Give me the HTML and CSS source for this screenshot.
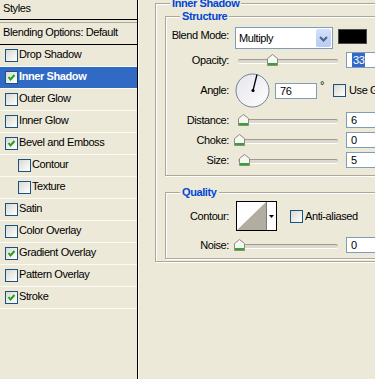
FILE: index.html
```html
<!DOCTYPE html>
<html lang="en">
<head>
    <meta charset="UTF-8">
    <meta name="viewport" content="width=device-width, initial-scale=1.0">
    <title>Layer Style</title>
    <link rel="stylesheet" href="styles.css">
</head>
<body>
    <div class="dialog">
        <aside class="styles">
            <div class="styles-head">Styles</div>
            <div class="styles-blend">Blending Options: Default</div>
            <ul class="fx">
                <li><span class="cb"></span><span class="fx-name">Drop Shadow</span></li>
                <li class="sel"><span class="cb"><svg width="11" height="11"><polyline points="2.5,5 4.5,7.5 8.5,3" /></svg></span><span class="fx-name">Inner Shadow</span></li>
                <li><span class="cb"></span><span class="fx-name">Outer Glow</span></li>
                <li><span class="cb"></span><span class="fx-name">Inner Glow</span></li>
                <li><span class="cb"><svg width="11" height="11"><polyline points="2.5,5 4.5,7.5 8.5,3" /></svg></span><span class="fx-name">Bevel and Emboss</span></li>
                <li class="sub"><span class="cb"></span><span class="fx-name">Contour</span></li>
                <li class="sub"><span class="cb"></span><span class="fx-name">Texture</span></li>
                <li><span class="cb"></span><span class="fx-name">Satin</span></li>
                <li><span class="cb"></span><span class="fx-name">Color Overlay</span></li>
                <li><span class="cb"><svg width="11" height="11"><polyline points="2.5,5 4.5,7.5 8.5,3" /></svg></span><span class="fx-name">Gradient Overlay</span></li>
                <li><span class="cb"></span><span class="fx-name">Pattern Overlay</span></li>
                <li><span class="cb"><svg width="11" height="11"><polyline points="2.5,5 4.5,7.5 8.5,3" /></svg></span><span class="fx-name">Stroke</span></li>
            </ul>
        </aside>

        <main class="panel">
            <fieldset class="group outer">
                <legend>Inner Shadow</legend>

                <fieldset class="group structure">
                    <legend>Structure</legend>

                    <div class="row blend-row">
                        <label class="lbl">Blend Mode:</label>
                        <div class="select">
                            <span>Multiply</span>
                            <span class="select-btn">
                                <svg width="15" height="20"><polyline points="4,8 7.5,11.5 11,8" /></svg>
                            </span>
                        </div>
                        <span class="swatch"></span>
                    </div>

                    <div class="row slide-row opacity-row">
                        <label class="lbl">Opacity:</label>
                        <div class="slider">
                            <svg class="thumb" style="left: 34px" width="11" height="12"><path d="M0.5 4.5 L5.5 0.5 L10.5 4.5 V11.5 H0.5 Z" /><rect x="1" y="9" width="9" height="2" /></svg>
                        </div>
                        <span class="field"><span class="hl">33</span></span>
                    </div>

                    <div class="row angle-row">
                        <label class="lbl">Angle:</label>
                        <svg class="dial" width="35" height="35">
                            <defs>
                                <linearGradient id="dialFill" x1="0" y1="0" x2="1" y2="1">
                                    <stop offset="0" stop-color="#e4e4ec" />
                                    <stop offset="1" stop-color="#ffffff" />
                                </linearGradient>
                            </defs>
                            <circle cx="17.5" cy="17.5" r="16.5" fill="url(#dialFill)" stroke="#71809c" />
                            <line x1="18" y1="17.5" x2="22" y2="1.5" stroke="#000" stroke-width="1.3" />
                            <circle cx="18" cy="17.5" r="1.6" fill="#000" />
                        </svg>
                        <span class="field field-angle">76</span>
                        <span class="deg">°</span>
                        <span class="cb cb-global"></span>
                        <span class="cb-text">Use Global Light</span>
                    </div>

                    <div class="row slide-row">
                        <label class="lbl">Distance:</label>
                        <div class="slider">
                            <svg class="thumb" style="left: 5px" width="11" height="12"><path d="M0.5 4.5 L5.5 0.5 L10.5 4.5 V11.5 H0.5 Z" /><rect x="1" y="9" width="9" height="2" /></svg>
                        </div>
                        <span class="field">6</span>
                    </div>

                    <div class="row slide-row">
                        <label class="lbl">Choke:</label>
                        <div class="slider">
                            <svg class="thumb" style="left: 1px" width="11" height="12"><path d="M0.5 4.5 L5.5 0.5 L10.5 4.5 V11.5 H0.5 Z" /><rect x="1" y="9" width="9" height="2" /></svg>
                        </div>
                        <span class="field">0</span>
                    </div>

                    <div class="row slide-row">
                        <label class="lbl">Size:</label>
                        <div class="slider">
                            <svg class="thumb" style="left: 6px" width="11" height="12"><path d="M0.5 4.5 L5.5 0.5 L10.5 4.5 V11.5 H0.5 Z" /><rect x="1" y="9" width="9" height="2" /></svg>
                        </div>
                        <span class="field">5</span>
                    </div>
                </fieldset>

                <fieldset class="group quality">
                    <legend>Quality</legend>

                    <div class="row contour-row">
                        <label class="lbl">Contour:</label>
                        <div class="contour">
                            <svg width="39" height="28">
                                <rect x="0" y="0" width="29" height="28" fill="#fff" />
                                <polygon points="0,28 29,0 29,28" fill="#b1ada1" />
                                <line x1="29.5" y1="0" x2="29.5" y2="28" stroke="#7b7b7b" />
                                <rect x="30" y="0" width="9" height="28" fill="#fff" />
                                <polygon points="32,13 37,13 34.5,16" fill="#000" />
                            </svg>
                        </div>
                        <span class="cb cb-aa"></span>
                        <span class="cb-text">Anti-aliased</span>
                    </div>

                    <div class="row slide-row noise-row">
                        <label class="lbl">Noise:</label>
                        <div class="slider">
                            <svg class="thumb" style="left: 1px" width="11" height="12"><path d="M0.5 4.5 L5.5 0.5 L10.5 4.5 V11.5 H0.5 Z" /><rect x="1" y="9" width="9" height="2" /></svg>
                        </div>
                        <span class="field">0</span>
                    </div>
                </fieldset>
            </fieldset>
        </main>
    </div>
</body>
</html>
```

FILE: styles.css
```css
* {
    box-sizing: border-box;
}
body {
    margin: 0;
    background-color: #ece9d8;
    font-family: "Liberation Sans", Arial, sans-serif;
    font-size: 11px;
    letter-spacing: -0.4px;
    color: #000;
    overflow: hidden;
}
.dialog {
    display: flex;
    height: 379px;
}

/* left list of effects */
.styles {
    flex: none;
    width: 138px;
    border-right: 1px solid #000;
}
.styles-head {
    height: 20px;
    padding: 2px 0 0 3px;
    line-height: 13px;
    border-bottom: 1px solid #000;
}
.styles-blend {
    height: 23px;
    margin-top: 2px;
    padding: 3px 0 0 3px;
    line-height: 13px;
    border-top: 1px solid #aca899;
    border-bottom: 1px solid #000;
}
.fx {
    list-style: none;
    margin: 0;
    padding: 0;
}
.fx li {
    display: flex;
    align-items: center;
    height: 22px;
    padding-left: 5px;
    border-bottom: 1px solid #fcfbf6;
}
.fx li.sub {
    padding-left: 18px;
}
.fx li.sel {
    background-color: #316ac5;
    color: #fff;
    font-weight: bold;
}
.fx-name {
    margin-left: 1px;
    margin-bottom: 2px;
    line-height: 13px;
}
.cb {
    flex: none;
    display: block;
    width: 13px;
    height: 13px;
    border: 1px solid #1c5180;
    background: linear-gradient(135deg, #d8d8d2, #ffffff);
}
.cb svg {
    display: block;
}
.cb polyline {
    fill: none;
    stroke: #21a121;
    stroke-width: 2;
}

/* right options panel */
.panel {
    flex: none;
    width: 420px;
    padding-left: 16px;
    border-left: 1px solid #faf9f3;
}
.group {
    margin: 0;
    padding: 0;
    min-width: 0;
    border: 1px solid #aca899;
    box-shadow: inset 1px 1px 0 #fff, 1px 1px 0 #fff;
}
.group legend {
    padding: 0 2px;
    margin-left: 14px;
    line-height: 13px;
    font-weight: bold;
    color: #0046d5;
    background-color: #ece9d8;
}
.outer {
    width: 400px;
    margin-top: -3px;
    padding: 0 0 2px 9px;
}
.outer > legend {
    margin-left: 5px;
}
.structure {
    width: 300px;
    padding: 4px 0 7px 0;
}
.quality {
    width: 300px;
    margin-top: 10px;
    padding: 2px 0 5px 0;
}

.row {
    display: flex;
    align-items: center;
}
.lbl {
    flex: none;
    width: 63px;
    text-align: right;
    line-height: 13px;
}

.blend-row {
    height: 22px;
    align-items: flex-start;
}
.blend-row .lbl {
    padding-top: 2px;
}
.select {
    flex: none;
    display: flex;
    align-items: center;
    width: 98px;
    height: 22px;
    margin-left: 6px;
    padding: 1px 1px 1px 3px;
    border: 1px solid #7f9db9;
    background-color: #fff;
}
.select-btn {
    margin-left: auto;
    width: 15px;
    height: 18px;
    border-radius: 2px;
    background: linear-gradient(#d4e0fc, #b9cbf3);
}
.select-btn svg {
    display: block;
}
.select-btn polyline {
    fill: none;
    stroke: #4d6185;
    stroke-width: 2;
}
.swatch {
    flex: none;
    width: 29px;
    height: 15px;
    margin: 2px 0 0 5px;
    background-color: #000;
    border: 1px solid #4a4a4a;
}

.slide-row {
    height: 16px;
    margin-top: 4px;
}
.opacity-row {
    margin-top: 3px;
}
.slider {
    position: relative;
    flex: none;
    width: 110px;
    height: 16px;
    margin-left: 4px;
}
.slider::before {
    content: "";
    position: absolute;
    left: 5px;
    right: 5px;
    top: 7px;
    height: 3px;
    border-top: 1px solid #9d9a8e;
    border-bottom: 1px solid #fff;
    border-radius: 2px;
    background-color: #dcd9cc;
}
.thumb {
    position: absolute;
    top: 2px;
}
.thumb path {
    fill: #f7f7f3;
    stroke: #8d8b80;
}
.thumb rect {
    fill: #2fa82f;
}
.field {
    flex: none;
    width: 44px;
    height: 16px;
    margin-left: 3px;
    padding-left: 4px;
    border: 1px solid #7f9db9;
    background-color: #fff;
    line-height: 14px;
}
.hl {
    display: inline-block;
    margin-left: 1px;
    padding: 0 1px;
    background-color: #316ac5;
    color: #fff;
}

.angle-row {
    height: 35px;
    margin-top: 5px;
}
.dial {
    flex: none;
    margin-left: 6px;
}
.field-angle {
    width: 42px;
    margin-left: 5px;
}
.deg {
    align-self: flex-start;
    margin: 6px 0 0 3px;
    line-height: 13px;
}
.cb-global {
    margin-left: 9px;
}
.cb-text {
    margin-left: 3px;
    white-space: nowrap;
    line-height: 13px;
}

.contour-row {
    height: 30px;
}
.contour {
    flex: none;
    width: 41px;
    height: 30px;
    margin-left: 7px;
    border: 1px solid #000;
}
.contour svg {
    display: block;
}
.cb-aa {
    margin-left: 13px;
}
.contour-row .cb-text {
    margin-left: 2px;
}
.noise-row {
    margin-top: 6px;
}
```
